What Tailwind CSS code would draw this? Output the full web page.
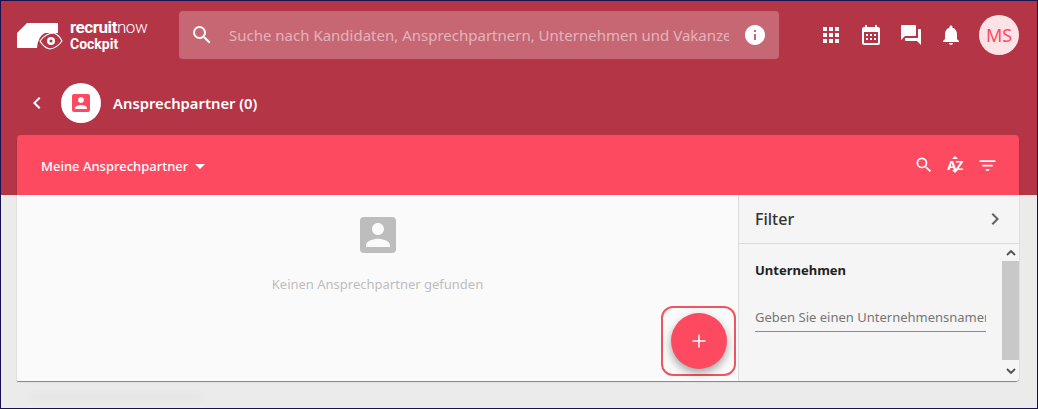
<!DOCTYPE html>
<html lang="en">
  <head>
    <meta charset="UTF-8" />
    <title>Ansprechpartner</title>
    <script src="https://cdn.jsdelivr.net/npm/@tailwindcss/browser@4"></script>
  </head>
  <body class="w-[1038px] h-[409px] overflow-hidden bg-[#ebebeb] font-['Noto_Sans',sans-serif]">
    <div class="relative w-full h-full border border-[#1a1150] overflow-hidden">
      <!-- Red backdrop -->
      <div class="bg-[#b43546] h-[194px]">
        <!-- Top bar -->
        <header class="flex items-center h-[68px]">
          <div class="flex items-center w-[178px] pl-4 h-full">
            <svg width="48" height="30" viewBox="17 20 48 30" class="shrink-0">
              <path d="M17 33 L27 23 H58 V33 H45 Q38 36 37 48 H17 Z" fill="#fff" />
              <path d="M40 41 Q46 33 54 33 Q59 35 62 41 Q57 48 50 49 Q44 48 40 41 Z" fill="none" stroke="#fff" stroke-width="1.200" />
              <circle cx="51" cy="41" r="4" fill="#fff" />
              <circle cx="51" cy="41" r="1.500" fill="#b43546" />
            </svg>
            <div class="ml-[5px] font-['Roboto',sans-serif] text-white">
              <div class="text-[17px] leading-[19px] font-bold tracking-[-0.45px]">recruit<span class="font-light">now</span></div>
              <div class="text-[14px] leading-[15px] font-bold">Cockpit</div>
            </div>
          </div>
          <div class="flex items-center w-[600px] h-12 rounded bg-white/25 pl-[11px] pr-3">
            <svg width="24" height="24" viewBox="0 0 24 24" fill="#fff" class="shrink-0">
              <path d="M15.500 14h-.79l-.28-.27A6.470 6.470 0 0 0 16 9.500 6.500 6.500 0 1 0 9.500 16c1.610 0 3.090-.59 4.230-1.570l.27.28v.79l5 4.990L20.490 19l-4.990-5zm-6 0C7.010 14 5 11.990 5 9.500S7.010 5 9.500 5 14 7.010 14 9.500 11.990 14 9.500 14z" />
            </svg>
            <div class="ml-[15px] flex-1 overflow-hidden whitespace-nowrap text-[15px] text-white/50">Suche nach Kandidaten, Ansprechpartnern, Unternehmen und Vakanzen</div>
            <svg width="24" height="24" viewBox="0 0 24 24" fill="#fff" class="shrink-0 ml-[14px]">
              <path d="M12 2C6.480 2 2 6.480 2 12s4.480 10 10 10 10-4.480 10-10S17.520 2 12 2zm1 15h-2v-6h2v6zm0-8h-2V7h2v2z" />
            </svg>
          </div>
          <div class="flex items-center ml-10 gap-4">
            <svg width="24" height="24" viewBox="0 0 24 24" fill="#fff"><path d="M4 8h4V4H4v4zm6 12h4v-4h-4v4zm-6 0h4v-4H4v4zm0-6h4v-4H4v4zm6 0h4v-4h-4v4zm6-10v4h4V4h-4zm-6 4h4V4h-4v4zm6 6h4v-4h-4v4zm0 6h4v-4h-4v4z" /></svg>
            <svg width="24" height="24" viewBox="0 0 24 24" fill="#fff"><path d="M19 4h-1V2h-2v2H8V2H6v2H5a2 2 0 0 0-2 2v14a2 2 0 0 0 2 2h14a2 2 0 0 0 2-2V6a2 2 0 0 0-2-2zm0 16H5V9h14v11zM7 11h2v2H7zm4 0h2v2h-2zm4 0h2v2h-2zm-8 4h2v2H7zm4 0h2v2h-2zm4 0h2v2h-2z" /></svg>
            <svg width="24" height="24" viewBox="0 0 24 24" fill="#fff"><path d="M21 6h-2v9H6v2c0 .55.45 1 1 1h11l4 4V7c0-.55-.45-1-1-1zm-4 6V3c0-.55-.45-1-1-1H3c-.55 0-1 .45-1 1v14l4-4h10c.55 0 1-.45 1-1z" /></svg>
            <svg width="24" height="24" viewBox="0 0 24 24" fill="#fff"><path d="M12 22c1.100 0 2-.9 2-2h-4c0 1.100.9 2 2 2zm6-6v-5c0-3.070-1.630-5.640-4.500-6.320V4c0-.83-.67-1.500-1.500-1.500s-1.500.67-1.500 1.500v.68C7.640 5.360 6 7.920 6 11v5l-2 2v1h16v-1l-2-2z" /></svg>
            <div class="flex items-center justify-center w-10 h-10 rounded-full bg-[#fde3e6] text-[#fd4a60] text-[18px]">MS</div>
          </div>
        </header>
        <!-- Page title -->
        <div class="flex items-center h-10 mt-[14px] pl-6">
          <svg width="24" height="24" viewBox="0 0 24 24" fill="#fff"><path d="M15.410 7.410 14 6l-6 6 6 6 1.410-1.410L10.830 12z" /></svg>
          <div class="flex items-center justify-center w-10 h-10 rounded-full bg-white ml-3">
            <svg width="24" height="24" viewBox="0 0 24 24" fill="#fd4a60"><path d="M3 5v14a2 2 0 0 0 2 2h14a2 2 0 0 0 2-2V5a2 2 0 0 0-2-2H5a2 2 0 0 0-2 2zm12 4c0 1.660-1.340 3-3 3s-3-1.340-3-3 1.340-3 3-3 3 1.340 3 3zm-9 8c0-2 4-3.100 6-3.100s6 1.100 6 3.100v1H6v-1z" /></svg>
          </div>
          <div class="ml-3 text-white text-[14.800px] font-semibold">Ansprechpartner (0)</div>
        </div>
      </div>

      <!-- Faint shadow under the card -->
      <div class="absolute left-[30px] top-[396px] w-[170px] h-0 shadow-[0_0_8px_2px_rgba(0,0,0,0.05)]"></div>

      <!-- Card -->
      <div class="absolute left-4 top-[134px] w-[1002px] h-[246px] rounded-t rounded-br shadow-[0_1px_1px_rgba(0,0,0,0.45)] flex flex-col overflow-hidden">
        <div class="flex items-center h-[60px] bg-[#fd4a60] pl-6 pr-[21px] shrink-0 text-white">
          <span class="text-[13px] font-medium mt-[3px]">Meine Ansprechpartner</span>
          <span class="ml-[7px] mt-[3px] w-0 h-0 border-x-[5px] border-x-transparent border-t-[5px] border-t-white"></span>
          <div class="ml-auto flex items-center gap-2">
            <svg width="24" height="24" viewBox="0 0 24 24" fill="#fff" class="w-5 h-5 mr-[1px]"><path d="M15.500 14h-.79l-.28-.27A6.470 6.470 0 0 0 16 9.500 6.500 6.500 0 1 0 9.500 16c1.610 0 3.090-.59 4.230-1.570l.27.28v.79l5 4.990L20.490 19l-4.990-5zm-6 0C7.010 14 5 11.990 5 9.500S7.010 5 9.500 5 14 7.010 14 9.500 11.990 14 9.500 14z" /></svg>
            <div class="relative w-6 h-6 flex items-center justify-center text-[13px] font-bold leading-none tracking-[-0.5px]">
              AZ
              <span class="absolute left-[9px] top-[3px] w-0 h-0 border-x-[3px] border-x-transparent border-b-[3px] border-b-white"></span>
              <span class="absolute left-[9px] bottom-[4px] w-0 h-0 border-x-[3px] border-x-transparent border-t-[3px] border-t-white"></span>
            </div>
            <svg width="24" height="24" viewBox="0 0 24 24" fill="#fff" class="w-[21px] h-[21px] ml-[2px]"><path d="M10 18h4v-2h-4v2zM3 6v2h18V6H3zm3 7h12v-2H6v2z" /></svg>
          </div>
        </div>
        <div class="flex flex-1 min-h-0">
          <!-- Empty state -->
          <div class="relative w-[721px] bg-[#fafafa] flex flex-col items-center pt-4">
            <svg width="48" height="48" viewBox="0 0 24 24" fill="#bdbdbd"><path d="M3 5v14a2 2 0 0 0 2 2h14a2 2 0 0 0 2-2V5a2 2 0 0 0-2-2H5a2 2 0 0 0-2 2zm12 4c0 1.660-1.340 3-3 3s-3-1.340-3-3 1.340-3 3-3 3 1.340 3 3zm-9 8c0-2 4-3.100 6-3.100s6 1.100 6 3.100v1H6v-1z" /></svg>
            <div class="mt-4 text-[13px] text-[#bdbdbd]">Keinen Ansprechpartner gefunden</div>
            <!-- Highlighted add button -->
            <div class="absolute left-[644px] top-[111px] w-[75px] h-[70px] rounded-[12px] border-2 border-[#ee5560] flex items-center justify-center">
              <button class="w-14 h-14 rounded-full bg-[#fd4a60] shadow-[0_4px_8px_rgba(0,0,0,0.35)] flex items-center justify-center">
                <svg width="24" height="24" viewBox="0 0 24 24" fill="#fff"><path d="M18.500 12.750h-5.750v5.750h-1.500v-5.750H5.500v-1.500h5.750V5.500h1.500v5.750h5.750z" /></svg>
              </button>
            </div>
          </div>
          <!-- Filter panel -->
          <aside class="flex-1 bg-[#f5f5f5] border-l border-[#dcdcdc] flex flex-col min-w-0">
            <div class="flex items-center justify-between h-[49px] pl-4 pr-3 border-b border-[#dcdcdc] shrink-0">
              <span class="text-[16px] font-medium text-[#333]">Filter</span>
              <svg width="24" height="24" viewBox="0 0 24 24" fill="#5f6368"><path d="M10 6 8.590 7.410 13.170 12l-4.580 4.590L10 18l6-6z" /></svg>
            </div>
            <div class="flex flex-1 min-h-0">
              <div class="flex-1 pl-4 pr-4 pt-[17px] min-w-0">
                <div class="text-[13px] font-bold text-[#212121]">Unternehmen</div>
                <div class="mt-[21px] h-[30px] pt-[2px] border-b border-[#8a8a8a] overflow-hidden whitespace-nowrap text-[13px] leading-[27px] text-[#757575]">Geben Sie einen Unternehmensnamen ein</div>
              </div>
              <div class="w-[17px] flex flex-col shrink-0 bg-[#f5f5f5]">
                <div class="h-[17px] flex items-center justify-center">
                  <svg width="10" height="10" viewBox="0 0 10 10" fill="none" stroke="#505050" stroke-width="1.800"><path d="M1 7 5 3l4 4" /></svg>
                </div>
                <div class="flex-1 bg-[#c8c8c8]"></div>
                <div class="h-[21px] flex items-center justify-center">
                  <svg width="10" height="10" viewBox="0 0 10 10" fill="none" stroke="#505050" stroke-width="1.800"><path d="M1 3l4 4 4-4" /></svg>
                </div>
              </div>
            </div>
          </aside>
        </div>
      </div>
    </div>
  </body>
</html>
